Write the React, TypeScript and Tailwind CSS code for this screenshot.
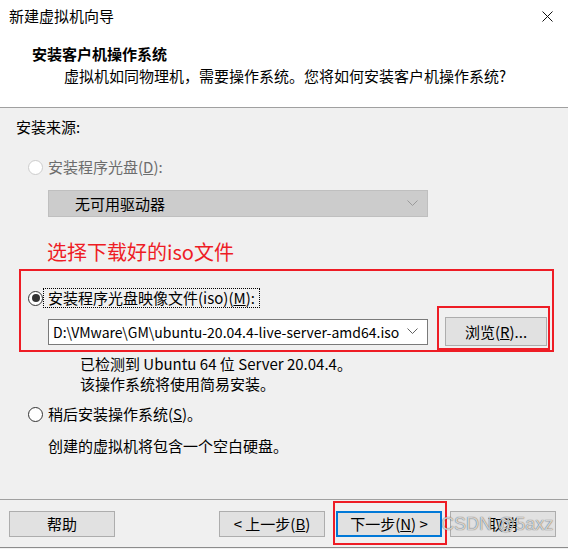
import React from "react";

function Radio({ checked, disabled }: { checked?: boolean; disabled?: boolean }) {
  return (
    <span
      className={
        disabled
          ? "w-[15px] h-[15px] rounded-full border border-[#cccccc] bg-white flex items-center justify-center shrink-0"
          : "w-[15px] h-[15px] rounded-full border border-[#333333] bg-white flex items-center justify-center shrink-0"
      }
    >
      {checked && <span className="w-[8px] h-[8px] rounded-full bg-[#333333]" />}
    </span>
  );
}

function Chevron({ color }: { color: string }) {
  return (
    <svg width="11" height="7" viewBox="0 0 11 7" className="shrink-0">
      <polyline points="0.5,0.5 5.5,5.5 10.5,0.5" fill="none" stroke={color} strokeWidth="1" />
    </svg>
  );
}

function Btn({ children, focus }: { children: React.ReactNode; focus?: boolean }) {
  return (
    <div
      className={
        focus
          ? "h-[26px] w-[106px] bg-[#e1e1e1] border-2 border-[#0078d7] flex items-center justify-center text-[15px] leading-[20px] text-black"
          : "h-[26px] w-[106px] bg-[#e1e1e1] border border-[#adadad] flex items-center justify-center text-[15px] leading-[20px] text-black"
      }
    >
      {children}
    </div>
  );
}

export default function App() {
  return (
    <div
      className="relative w-[568px] h-[549px] bg-[#f0f0f0] flex flex-col text-black overflow-hidden text-[15px]"
      style={{ fontFamily: '"Noto Sans CJK SC", "Noto Sans", sans-serif' }}
    >
      {/* header */}
      <div className="h-[107px] bg-white flex flex-col shrink-0">
        <div className="h-[32px] flex items-center justify-between pl-[9px] pr-[15px]">
          <span className="leading-[20px]">新建虚拟机向导</span>
          <svg width="11" height="11" viewBox="0 0 11 11">
            <path d="M0.5 0.5 L10.5 10.5 M10.5 0.5 L0.5 10.5" stroke="#111" strokeWidth="1" fill="none" />
          </svg>
        </div>
        <div className="mt-[12px] h-[20px] leading-[20px] pl-[32px] font-bold">安装客户机操作系统</div>
        <div className="mt-[2px] h-[20px] leading-[20px] pl-[64px]">
          虚拟机如同物理机，需要操作系统。您将如何安装客户机操作系统?
        </div>
      </div>
      <div className="h-px bg-[#a0a0a0] shrink-0" />

      {/* content */}
      <div className="flex-1 flex flex-col">
        <div className="mt-[9px] h-[20px] leading-[20px] pl-[16px]">安装来源:</div>

        <div className="mt-[20px] h-[20px] flex items-center pl-[28px]">
          <Radio disabled />
          <span className="ml-[5px] leading-[20px] text-[#6d6d6d]">
            安装程序光盘(<span className="underline">D</span>):
          </span>
        </div>

        <div className="mt-[13px] ml-[48px] w-[380px] h-[27px] bg-[#cccccc] border border-[#bfbfbf] flex items-center justify-between pl-[26px] pr-[9px]">
          <span className="leading-[20px]">无可用驱动器</span>
          <Chevron color="#9a9a9a" />
        </div>

        <div className="mt-[24px] h-[22px] leading-[22px] pl-[47px] text-[20px] text-[#ee1c25]">
          选择下载好的iso文件
        </div>

        <div className="mt-[25px] h-[20px] flex items-center pl-[28px]">
          <Radio checked />
          <span className="h-[20px] flex items-center px-[4px] border border-dotted border-black leading-[18px]">
            安装程序光盘映像文件(iso)(<span className="underline">M</span>):
          </span>
        </div>

        <div className="mt-[9px] h-[29px] flex items-center pl-[48px]">
          <div className="w-[380px] h-[26px] bg-white border border-[#7a7a7a] flex items-center justify-between pl-[4px] pr-[9px]">
            <span className="leading-[20px] whitespace-nowrap text-[14px]">D:\VMware\GM\ubuntu-20.04.4-live-server-amd64.iso</span>
            <Chevron color="#606060" />
          </div>
          <div className="ml-[17px] w-[102px] h-[29px] bg-[#e1e1e1] border border-[#adadad] flex items-center justify-center leading-[20px]">
            浏览(<span className="underline">R</span>)...
          </div>
        </div>

        <div className="mt-[8px] h-[20px] leading-[20px] pl-[80px]">已检测到 Ubuntu 64 位 Server 20.04.4。</div>
        <div className="h-[20px] leading-[20px] pl-[80px]">该操作系统将使用简易安装。</div>

        <div className="mt-[10px] h-[20px] flex items-center pl-[28px]">
          <Radio />
          <span className="ml-[5px] leading-[20px]">
            稍后安装操作系统(<span className="underline">S</span>)。
          </span>
        </div>

        <div className="mt-[12px] h-[20px] leading-[20px] pl-[48px]">创建的虚拟机将包含一个空白硬盘。</div>
      </div>

      <div className="h-px bg-[#a0a0a0] shrink-0" />
      {/* footer */}
      <div className="h-[47px] shrink-0 flex items-start pt-[11px] pl-[9px]">
        <Btn>帮助</Btn>
        <div className="ml-[104px]">
          <Btn>
            &lt; 上一步(<span className="underline">B</span>)
          </Btn>
        </div>
        <div className="ml-[11px]">
          <Btn focus>
            下一步(<span className="underline">N</span>) &gt;
          </Btn>
        </div>
        <div className="ml-[8px]">
          <Btn>取消</Btn>
        </div>
      </div>
      <div className="h-px bg-[#8c8c8c] shrink-0" />
      <div className="h-px bg-[#f0f0f0] shrink-0" />

      {/* annotations */}
      <div className="absolute left-[19px] top-[269px] w-[535px] h-[83px] border-2 border-[#ee1c25] pointer-events-none" />
      <div className="absolute left-[437px] top-[306px] w-[113px] h-[44px] border-2 border-[#ee1c25] pointer-events-none" />
      <div className="absolute left-[333px] top-[501px] w-[114px] h-[44px] border-2 border-[#ee1c25] pointer-events-none" />
      <div
        className="absolute left-[441px] top-[512px] text-[18px] leading-[24px] text-[rgba(255,255,255,0.75)] [text-shadow:0_0_1px_rgba(0,0,0,0.8)] pointer-events-none whitespace-nowrap"
        style={{ fontFamily: '"Liberation Sans", Arial, sans-serif' }}
      >
        CSDN @5axz
      </div>
    </div>
  );
}
